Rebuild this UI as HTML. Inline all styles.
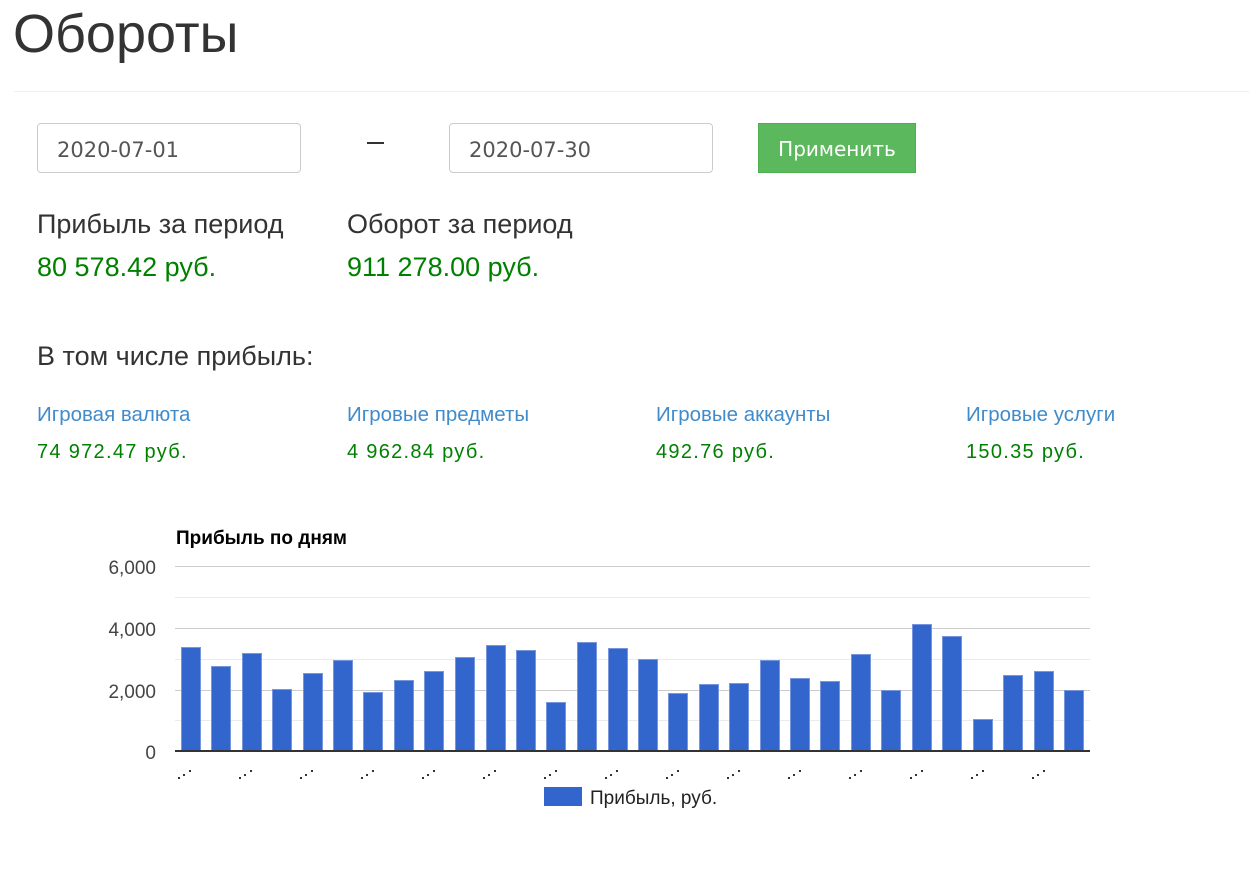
<!DOCTYPE html>
<html><head><meta charset="utf-8"><style>
body{margin:0;width:1249px;height:888px;background:#fff;font-family:"Liberation Sans",sans-serif;position:relative;overflow:hidden;color:#333}
.a{position:absolute;white-space:nowrap}
.inp{position:absolute;top:123px;width:262px;height:48px;border:1px solid #ccc;border-radius:4px;font-family:"DejaVu Sans",sans-serif;font-size:21px;color:#555;line-height:52px;text-indent:19px;box-sizing:content-box}
.g{color:#008000}
.l{color:#428bca;font-size:20.5px}
.s{color:#008000;font-size:20px;letter-spacing:1.3px}
.h{font-size:27px}
</style></head><body>
<div class="a" style="left:13px;top:3px;font-size:54px;color:#333">Обороты</div>
<div class="a" style="left:14px;top:91px;width:1235px;height:1px;background:#eee"></div>
<div class="inp" style="left:37px">2020-07-01</div>
<div class="a" style="left:367px;top:142px;width:17px;height:2px;background:#333"></div>
<div class="inp" style="left:449px">2020-07-30</div>
<div class="a" style="left:758px;top:123px;width:158px;height:50px;background:#5cb85c;border:1px solid #4cae4c;box-sizing:border-box;color:#fff;font-family:'DejaVu Sans',sans-serif;font-size:20px;line-height:50px;text-align:center">Применить</div>
<div class="a h" style="left:37px;top:209px">Прибыль за период</div>
<div class="a g h" style="left:37px;top:252px">80 578.42 руб.</div>
<div class="a h" style="left:347px;top:209px">Оборот за период</div>
<div class="a g h" style="left:347px;top:252px">911 278.00 руб.</div>
<div class="a h" style="left:37px;top:341px">В том числе прибыль:</div>
<div class="a l" style="left:37px;top:403px">Игровая валюта</div>
<div class="a s" style="left:37px;top:441px">74 972.47 руб.</div>
<div class="a l" style="left:347px;top:403px">Игровые предметы</div>
<div class="a s" style="left:347px;top:441px">4 962.84 руб.</div>
<div class="a l" style="left:656px;top:403px">Игровые аккаунты</div>
<div class="a s" style="left:656px;top:441px">492.76 руб.</div>
<div class="a l" style="left:966px;top:403px">Игровые услуги</div>
<div class="a s" style="left:966px;top:441px">150.35 руб.</div>
<svg class="a" style="left:0;top:0" width="1249" height="888" font-family="Liberation Sans, sans-serif">
<text x="176" y="544" font-size="19" font-weight="bold" fill="#000">Прибыль по дням</text>
<g stroke="#ebebeb"><line x1="175" x2="1090" y1="597.5" y2="597.5"/><line x1="175" x2="1090" y1="659.5" y2="659.5"/><line x1="175" x2="1090" y1="720.5" y2="720.5"/></g>
<g stroke="#ccc"><line x1="175" x2="1090" y1="566.5" y2="566.5"/><line x1="175" x2="1090" y1="628.5" y2="628.5"/><line x1="175" x2="1090" y1="690.5" y2="690.5"/></g>
<g font-size="19" fill="#444" text-anchor="end"><text x="156" y="574">6,000</text><text x="156" y="636">4,000</text><text x="156" y="698">2,000</text><text x="156" y="759">0</text></g>
<g fill="#3366cc" stroke="#7796dd" stroke-width="1">
<rect x="181.5" y="647.5" width="19" height="104"/>
<rect x="211.5" y="666.5" width="19" height="85"/>
<rect x="242.5" y="653.5" width="19" height="98"/>
<rect x="272.5" y="689.5" width="19" height="62"/>
<rect x="303.5" y="673.5" width="19" height="78"/>
<rect x="333.5" y="660.5" width="19" height="91"/>
<rect x="363.5" y="692.5" width="19" height="59"/>
<rect x="394.5" y="680.5" width="19" height="71"/>
<rect x="424.5" y="671.5" width="19" height="80"/>
<rect x="455.5" y="657.5" width="19" height="94"/>
<rect x="486.5" y="645.5" width="19" height="106"/>
<rect x="516.5" y="650.5" width="19" height="101"/>
<rect x="546.5" y="702.5" width="19" height="49"/>
<rect x="577.5" y="642.5" width="19" height="109"/>
<rect x="608.5" y="648.5" width="19" height="103"/>
<rect x="638.5" y="659.5" width="19" height="92"/>
<rect x="668.5" y="693.5" width="19" height="58"/>
<rect x="699.5" y="684.5" width="19" height="67"/>
<rect x="729.5" y="683.5" width="19" height="68"/>
<rect x="760.5" y="660.5" width="19" height="91"/>
<rect x="790.5" y="678.5" width="19" height="73"/>
<rect x="820.5" y="681.5" width="19" height="70"/>
<rect x="851.5" y="654.5" width="19" height="97"/>
<rect x="881.5" y="690.5" width="19" height="61"/>
<rect x="912.5" y="624.5" width="19" height="127"/>
<rect x="942.5" y="636.5" width="19" height="115"/>
<rect x="973.5" y="719.5" width="19" height="32"/>
<rect x="1003.5" y="675.5" width="19" height="76"/>
<rect x="1034.5" y="671.5" width="19" height="80"/>
<rect x="1064.5" y="690.5" width="19" height="61"/>
</g>
<line x1="175" x2="1090" y1="751" y2="751" stroke="#333" stroke-width="2"/>
<defs><g id="d" fill="#333"><rect x="0" y="7" width="2" height="2"/><rect x="5" y="4" width="2" height="2"/><rect x="11" y="0" width="2" height="2"/></g></defs>
<use href="#d" x="178" y="770"/><use href="#d" x="239" y="770"/><use href="#d" x="300" y="770"/><use href="#d" x="361" y="770"/><use href="#d" x="422" y="770"/><use href="#d" x="483" y="770"/><use href="#d" x="544" y="770"/><use href="#d" x="605" y="770"/><use href="#d" x="666" y="770"/><use href="#d" x="727" y="770"/><use href="#d" x="788" y="770"/><use href="#d" x="849" y="770"/><use href="#d" x="910" y="770"/><use href="#d" x="971" y="770"/><use href="#d" x="1032" y="770"/>
<rect x="544" y="787" width="38" height="19" fill="#3366cc"/>
<text x="590" y="804" font-size="19" fill="#222">Прибыль, руб.</text>
</svg>
</body></html>
